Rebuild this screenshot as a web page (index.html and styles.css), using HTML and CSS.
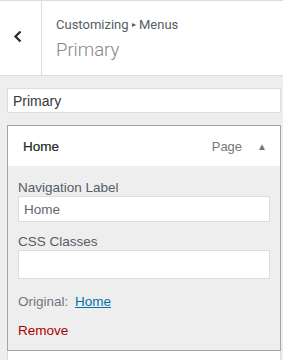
FILE: index.html
```html
<!DOCTYPE html>
<html lang="en">
<head>
  <meta charset="UTF-8">
  <meta name="viewport" content="width=device-width, initial-scale=1.0">
  <link rel="stylesheet" href="styles.css">
  <title>Customizing Menus</title>
</head>
<body>
  <div class="panel-header">
    <button class="back-button" aria-label="Back">
      <svg width="10" height="13" viewBox="0 0 10 13"><path d="M7.5 1.5 L2.5 6.5 L7.5 11.5" fill="none" stroke="#23282d" stroke-width="2.2"/></svg>
    </button>
    <div class="panel-title">
      <div class="crumbs">Customizing <span class="sep">&#9656;</span> Menus</div>
      <div class="title">Primary</div>
    </div>
  </div>

  <div class="panel-body">
    <input type="text" class="menu-name" value="Primary">

    <div class="menu-item open">
      <div class="item-bar">
        <span class="item-title">Home</span>
        <span class="item-type">Page</span>
        <span class="item-toggle">&#9650;</span>
      </div>
      <div class="item-settings">
        <label for="navLabel">Navigation Label</label>
        <input type="text" id="navLabel" value="Home">

        <label for="cssClasses">CSS Classes</label>
        <input type="text" id="cssClasses" class="tall">

        <p class="original">Original: <a href="#">Home</a></p>
        <a href="#" class="remove">Remove</a>
      </div>
    </div>

    <div class="menu-item next"></div>
  </div>
</body>
</html>
```

FILE: styles.css
```css
body {
  margin: 0;
  font-family: 'Liberation Sans', Arial, sans-serif;
  background-color: #fff;
  width: 283px;
  height: 360px;
  overflow: hidden;
}

.panel-header {
  display: flex;
  height: 74px;
  background-color: #fff;
  border-top: 1px solid #ddd;
  border-bottom: 1px solid #ddd;
}

.back-button {
  width: 42px;
  flex-shrink: 0;
  border: none;
  border-right: 1px solid #ddd;
  background: #fff;
  padding: 0 6px 4px 0;
  display: flex;
  align-items: center;
  justify-content: center;
}

.panel-title {
  padding: 15px 0 0 14px;
  font-family: Roboto, sans-serif;
  color: #555d66;
}

.crumbs {
  font-size: 13px;
  line-height: 18px;
}

.sep {
  font-size: 8px;
  vertical-align: 2px;
}

.title {
  font-size: 18.5px;
  font-weight: 300;
  line-height: 28px;
  margin-top: 2px;
  color: #82878c;
}

.panel-body {
  background-color: #eee;
  padding: 12px 2px 0 7px;
  height: 272px;
}

.menu-name {
  display: block;
  width: 100%;
  height: 25px;
  box-sizing: border-box;
  border: 1px solid #ddd;
  background: #fff;
  padding: 0 5px;
  font-family: 'Liberation Sans', Arial, sans-serif;
  font-size: 14px;
  color: #32373c;
  margin: 0;
}

.menu-item {
  border: 1px solid #ddd;
}

.menu-item.open {
  margin-top: 12px;
  border-color: #a0a5aa;
}

.menu-item.next {
  border-top: none;
  border-bottom: none;
  height: 9px;
  background: #fff;
}

.item-bar {
  display: flex;
  align-items: center;
  height: 40px;
  background: #fff;
  padding: 0 13px 0 15px;
}

.item-title {
  flex: 1;
  color: #23282d;
  font-size: 13.5px;
  -webkit-text-stroke: 0.2px #23282d;
}

.item-type {
  color: #72777c;
  font-size: 13px;
  margin-right: 15px;
}

.item-toggle {
  color: #72777c;
  font-size: 10px;
}

.item-settings {
  padding: 14px 10px 10px 10px;
  background: #eee;
}

label {
  display: block;
  font-size: 13.5px;
  color: #555d66;
  line-height: 16px;
}

.item-settings input {
  display: block;
  width: 100%;
  height: 26px;
  box-sizing: border-box;
  border: 1px solid #ddd;
  background: #fff;
  margin: 0 0 12px;
  padding: 0 5px;
  font-family: 'Liberation Sans', Arial, sans-serif;
  font-size: 13.5px;
  color: #666;
}

.item-settings input.tall {
  height: 29px;
  margin-bottom: 0;
}

.original {
  margin: 14px 0 0;
  line-height: 18px;
  font-size: 13.5px;
  color: #72777c;
}

.original a {
  color: #0073aa;
  margin-left: 3px;
}

.remove {
  display: block;
  margin-top: 11px;
  line-height: 18px;
  font-size: 13.5px;
  color: #a00;
  text-decoration: none;
}
```
